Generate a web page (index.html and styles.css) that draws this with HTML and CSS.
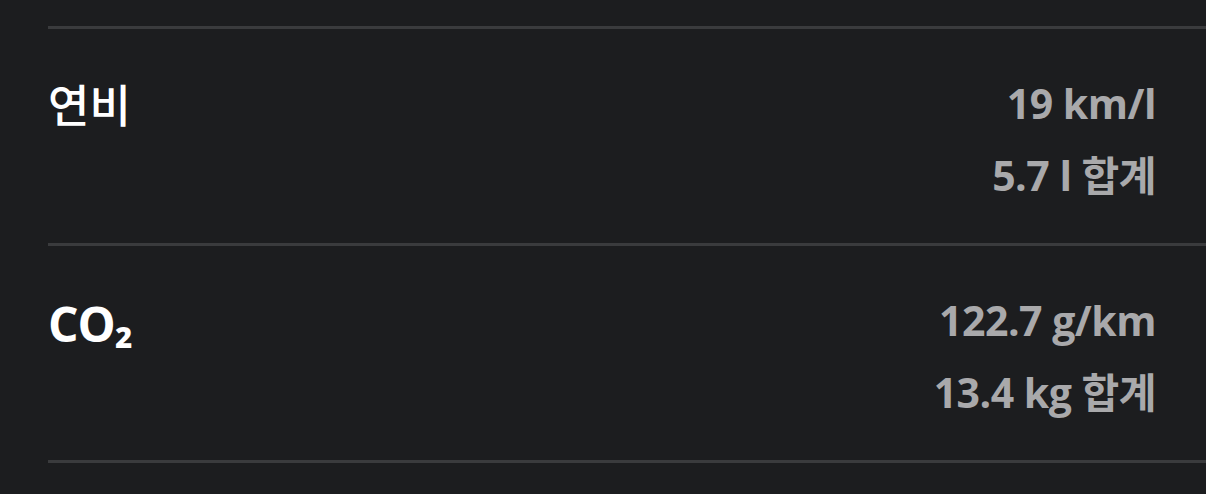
FILE: index.html
```html
<!DOCTYPE html>
<html lang="ko">
<head>
    <meta charset="UTF-8">
    <meta name="viewport" content="width=device-width, initial-scale=1.0">
    <title>연비 및 CO₂</title>
    <link rel="stylesheet" href="styles.css">
</head>
<body>
    <div class="spec-list">
        <div class="spec-row">
            <div class="spec-label">연비</div>
            <div class="spec-values">
                <div class="spec-value">19 km/l</div>
                <div class="spec-value">5.7 l 합계</div>
            </div>
        </div>
        <div class="spec-row">
            <div class="spec-label spec-label-latin">CO₂</div>
            <div class="spec-values">
                <div class="spec-value">122.7 g/km</div>
                <div class="spec-value">13.4 kg 합계</div>
            </div>
        </div>
    </div>
</body>
</html>
```

FILE: styles.css
```css
body {
    font-family: 'Open Sans', 'Noto Sans CJK KR', sans-serif;
    margin: 0;
    background: #1c1d1f;
    color: #fff;
}
.spec-list {
    margin-left: 48px;
    padding-top: 26px;
    border-bottom: 3px solid #3a3b3d;
}
.spec-row {
    display: flex;
    justify-content: space-between;
    align-items: flex-start;
    border-top: 3px solid #3a3b3d;
    padding: 38px 50px 32px 0;
}
.spec-label {
    font-size: 45px;
    font-weight: 500;
    line-height: 72px;
    padding-top: 3px;
}
.spec-label-latin {
    font-size: 48px;
    font-weight: 700;
    letter-spacing: -1px;
    padding-top: 4px;
}
.spec-values {
    text-align: right;
}
.spec-value {
    font-size: 41px;
    font-weight: 700;
    line-height: 72px;
    letter-spacing: -0.5px;
    color: #a9a9ab;
}
```
